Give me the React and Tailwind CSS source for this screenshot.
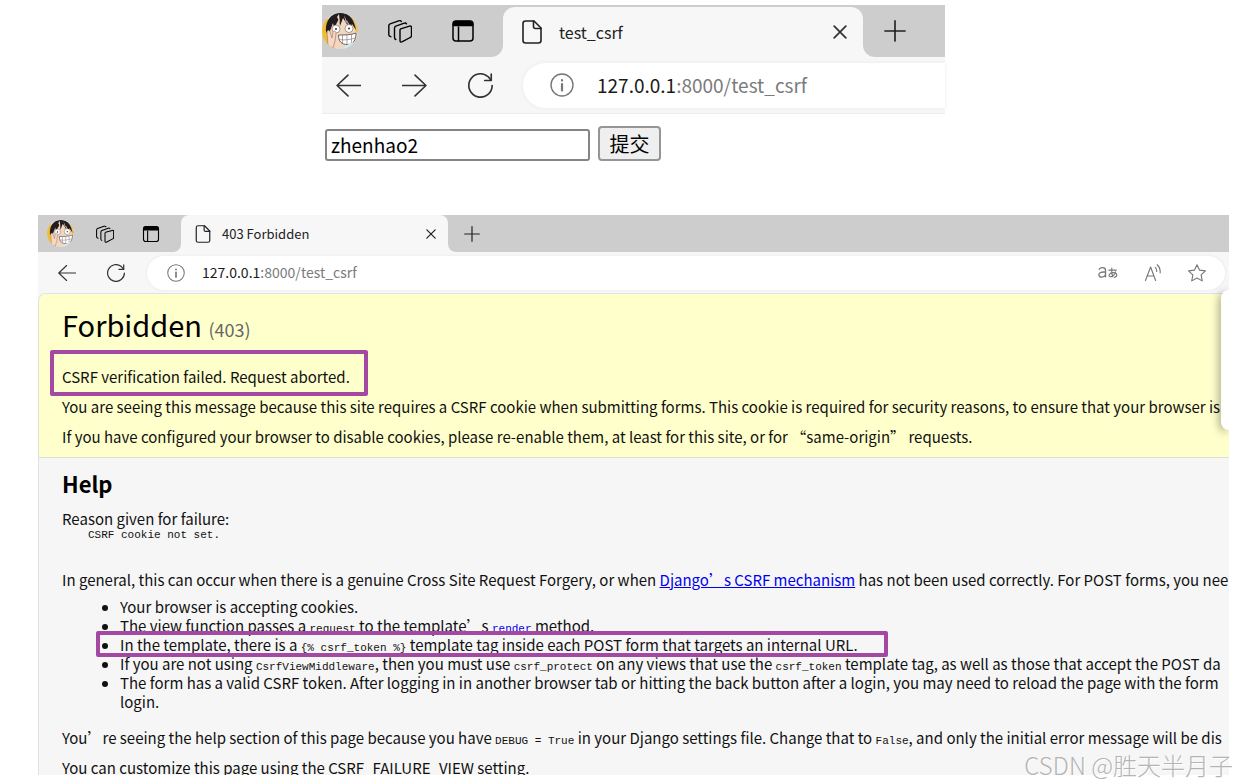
import React from 'react';

const AvatarIcon = ({ className }) => (
    <svg viewBox="0 0 36 36" className={className} aria-hidden="true">
        <clipPath id="avatar-circle">
            <circle cx="18" cy="18" r="18" />
        </clipPath>
        <g clipPath="url(#avatar-circle)">
            <rect width="36" height="36" fill="#e3dcd6" />
            <path d="M0 6h12v30H6L0 26z" fill="#efbd33" />
            <path d="M27 4h9v16l-5-2z" fill="#e8c25c" />
            <path d="M6 16 9 7 20 3l10 5 4 12-1 9-9 6H12l-6-8z" fill="#f3d6c0" />
            <path d="M4 19C3 9 8 1 17 0c9-1 15 5 17 17l-4-6-1 4-4-8 1 6-5-8-3 8-1-7-5 9-1-5-3 8-1 4z" fill="#211c1f" />
            <path d="m15 4 2-3 1 9zM22 2l3 7-1 1z" fill="#f3d6c0" />
            <circle cx="14" cy="16" r="4" fill="#fff" stroke="#6b5a55" strokeWidth="0.6" />
            <circle cx="27" cy="15.5" r="4" fill="#fff" stroke="#6b5a55" strokeWidth="0.6" />
            <circle cx="14" cy="16" r="0.9" fill="#222" />
            <circle cx="27" cy="15.5" r="0.9" fill="#222" />
            <path d="M16.500 22c6 0 12.500 0 17.500-2 0 6-2 11.500-8.500 11.500-6 0-9-3-9-9.500z" fill="#fff" stroke="#5c5050" strokeWidth="0.9" />
            <path d="M17 26.500c5 1 11.500 0 16.500-1.500M20.500 22v8M25 22v9M29.500 21.500v8.500" fill="none" stroke="#8b8080" strokeWidth="0.7" />
            <path d="M6 33 5 19c0-2 3-2 3 0l2 6 1-6c1-2 3-1 3 1l-1 8-2 7z" fill="#f6d8c4" stroke="#a57f6c" strokeWidth="0.7" />
            <path d="m21 34 10-5 1 8H21z" fill="#d3e8ec" />
        </g>
    </svg>
);

const LineIcon = ({ className, children, width = 1.6 }) => (
    <svg
        viewBox="0 0 24 24"
        className={className}
        fill="none"
        stroke="currentColor"
        strokeWidth={width}
        strokeLinecap="round"
        strokeLinejoin="round"
        aria-hidden="true"
    >
        {children}
    </svg>
);

const WorkspacesIcon = ({ className }) => (
    <LineIcon className={className} width={1.4}>
        <path d="M12.700 9.800 21.500 7.200q2-.6 2 1.300v7.900q0 1.500-1.300 2.100l-7.800 4.200q-2.400 1.200-2.400-1.300V11.200q0-1 .7-1.400z" />
        <path d="M7.800 20.500q-1.300-.5-1.300-2V9.200q0-1.500 1.300-2l8.500-3q1.600-.5 2.200.6" />
        <path d="M2.800 17.700q-2-.6-2-2V6.800q0-1.500 1.300-2L10.600 1.800q2-.6 2.700.6" />
    </LineIcon>
);

const TabActionsIcon = ({ className }) => (
    <LineIcon className={className} width={1.5}>
        <rect x="2" y="2" width="20" height="20" rx="3" />
        <path d="M2.500 6.500V5q0-2.500 2.500-2.500h14q2.500 0 2.500 2.500v1.500z" fill="currentColor" />
        <path d="M7.500 8v14" />
    </LineIcon>
);

const PageIcon = ({ className }) => (
    <LineIcon className={className}>
        <path d="M5.500 1h8.500l7 7v12.500q0 2.500-2.500 2.500h-13Q3 23 3 20.500v-17Q3 1 5.500 1z" />
        <path d="M13.500 1v5.500q0 2 2 2H21" />
    </LineIcon>
);

const CloseIcon = ({ className }) => (
    <LineIcon className={className} width={3}>
        <path d="m2 2 20 20M22 2 2 22" />
    </LineIcon>
);

const PlusIcon = ({ className }) => (
    <LineIcon className={className} width={1.8}>
        <path d="M12 1v22M1 12h22" />
    </LineIcon>
);

const BackIcon = ({ className }) => (
    <LineIcon className={className} width={1.5}>
        <path d="M23.500 12H1M11.500 2 1 12l10.500 10" />
    </LineIcon>
);

const ForwardIcon = ({ className }) => (
    <LineIcon className={className} width={1.5}>
        <path d="M.5 12H23M12.500 2 23 12 12.500 22" />
    </LineIcon>
);

const ReloadIcon = ({ className }) => (
    <LineIcon className={className} width={1.6}>
        <path d="M23.200 12a11.200 11.200 0 1 1-4-8.600l3 3.400" />
        <path d="M22.300 1v6.200H16" />
    </LineIcon>
);

const InfoIcon = ({ className }) => (
    <LineIcon className={className} width={1.4}>
        <circle cx="12" cy="12" r="11" />
        <path d="M12 11v6.500M12 7v.6" strokeWidth="2.200" />
    </LineIcon>
);

const TranslateIcon = ({ className }) => (
    <LineIcon className={className} width={1.6}>
        <path d="M1.500 7.500c1-2.500 7.500-3 7.500 1v8M9 11c-4-.5-8 0-8 3.200 0 4 6.500 3.500 8 0" />
        <path d="M13 8.500h9M16.500 6c-.3 4 0 7 1 10.500M21 10.500c-1 3.500-3.500 6-6 6-3.500 0-1.500-5 3-5 6 0 5.500 5 1.500 5.800" strokeWidth="1.300" />
    </LineIcon>
);

const ReadAloudIcon = ({ className }) => (
    <LineIcon className={className} width={1.5}>
        <path d="M2 22 8.800 4 15.500 22M4.500 16h8.500" />
        <path d="M15 4.500c1.500 1.500 2 3 2 5.500M17.500 1c3.500 3 4.500 6.500 4 11" />
    </LineIcon>
);

const StarIcon = ({ className }) => (
    <LineIcon className={className} width={1.5}>
        <path d="m12 1 3.400 7.200 7.900 1-5.800 5.400 1.500 7.900-7-3.900-7 3.900 1.500-7.900L.7 9.200l7.900-1z" />
    </LineIcon>
);

const Code = ({ children }) => (
    <code className="font-['Liberation_Mono',monospace] text-[11px] leading-none">{children}</code>
);

const SubmitWindow = () => (
    <section className="w-full max-w-[623px] mx-auto">
        <div className="flex bg-[#f7f7f7]">
            <div className="flex items-center w-[181px] h-[52px] shrink-0 bg-[#cdcdcd] rounded-br-xl">
                <AvatarIcon className="w-9 h-9" />
                <button aria-label="Workspaces" className="ml-[30px]"><WorkspacesIcon className="w-6 h-6" /></button>
                <button aria-label="Tab actions" className="ml-[39px]"><TabActionsIcon className="w-6 h-6" /></button>
            </div>
            <div className="w-[360px] shrink-0 bg-[#cdcdcd] pt-[2px]">
                <div className="flex items-center h-[50px] pl-[17px] pr-4 bg-[#f7f7f7] rounded-t-xl">
                    <PageIcon className="w-6 h-6 text-[#222]" />
                    <span className="ml-[15px] text-[16px] leading-6 text-[#222]">test_csrf</span>
                    <button aria-label="Close tab" className="ml-auto"><CloseIcon className="w-[14px] h-[14px] text-[#333]" /></button>
                </div>
            </div>
            <div className="flex items-center flex-1 pl-[21px] bg-[#cdcdcd] rounded-bl-xl">
                <button aria-label="New tab"><PlusIcon className="w-[22px] h-[22px] text-[#222]" /></button>
            </div>
        </div>
        <div className="flex items-center h-[57px] pl-[14px] bg-[#f7f7f7] border-b border-[#ececec] text-[#333]">
            <button aria-label="Back"><BackIcon className="w-[25px] h-[25px]" /></button>
            <button aria-label="Forward" className="ml-[41px]"><ForwardIcon className="w-[25px] h-[25px]" /></button>
            <button aria-label="Reload" className="ml-[41px]"><ReloadIcon className="w-[25px] h-[25px]" /></button>
            <div className="flex items-center flex-1 h-[45px] ml-[30px] pl-[27px] bg-white rounded-l-full text-[19px] shadow-[0_0_4px_#eaeaea]">
                <InfoIcon className="w-6 h-6 text-[#777]" />
                <span className="ml-[23px] text-[#7b7b7b]"><span className="text-[#1b1b1b]">127.0.0.1</span>:8000/test_csrf</span>
            </div>
        </div>
        <form className="flex items-end pt-3 pl-[3px]" onSubmit={(e) => e.preventDefault()}>
            <input
                type="text"
                name="username"
                aria-label="username"
                defaultValue="zhenhao2"
                className="w-[265px] h-8 px-1 pb-[2px] bg-white border-2 border-[#858585] rounded-[3px] text-[19px] leading-6 text-black"
            />
            <button type="submit" className="w-[63px] h-[35px] ml-2 bg-[#efefef] border-2 border-[#959595] rounded-[4px] text-[20px] leading-6">提交</button>
        </form>
    </section>
);

const ErrorWindow = () => (
    <section className="relative mt-[54px]">
        <div className="overflow-hidden whitespace-nowrap bg-[#f7f7f7]">
            <div className="flex">
                <div className="flex items-center w-[143px] h-[37px] shrink-0 pl-[9px] bg-[#cdcdcd] rounded-br-lg">
                    <AvatarIcon className="w-[27px] h-[27px]" />
                    <button aria-label="Workspaces" className="ml-[22px]"><WorkspacesIcon className="w-[18px] h-[18px]" /></button>
                    <button aria-label="Tab actions" className="ml-7"><TabActionsIcon className="w-[18px] h-[18px]" /></button>
                </div>
                <div className="w-[267px] shrink-0 bg-[#cdcdcd]">
                    <div className="flex items-center h-[37px] pl-[13px] pr-3 bg-[#f7f7f7] rounded-t-lg">
                        <PageIcon className="w-[18px] h-[18px] text-[#222]" />
                        <span className="ml-[10px] text-[13px] leading-5 text-[#222]">403 Forbidden</span>
                        <button aria-label="Close tab" className="ml-auto"><CloseIcon className="w-[10px] h-[10px] text-[#222]" /></button>
                    </div>
                </div>
                <div className="flex items-center flex-1 pl-4 bg-[#cdcdcd] rounded-bl-lg">
                    <button aria-label="New tab"><PlusIcon className="w-4 h-4 text-[#222]" /></button>
                </div>
            </div>
            <div className="flex items-center h-[41px] pl-5 pr-1 text-[#333]">
                <button aria-label="Back"><BackIcon className="w-[18px] h-[18px]" /></button>
                <button aria-label="Reload" className="ml-[31px]"><ReloadIcon className="w-[18px] h-[18px]" /></button>
                <div className="flex items-center flex-1 h-[34px] ml-[22px] pl-5 pr-[19px] bg-white rounded-full text-[14px] shadow-[0_0_3px_#e4e4e4]">
                    <InfoIcon className="w-[18px] h-[18px] text-[#777]" />
                    <span className="ml-[17px] text-[#7b7b7b]"><span className="text-[#1b1b1b]">127.0.0.1</span>:8000/test_csrf</span>
                    <div className="flex items-center gap-[26px] ml-auto text-[#777]">
                        <button aria-label="Translate"><TranslateIcon className="w-5 h-5" /></button>
                        <button aria-label="Read aloud"><ReadAloudIcon className="w-[18px] h-[18px]" /></button>
                        <button aria-label="Add to favorites"><StarIcon className="w-[18px] h-[18px]" /></button>
                    </div>
                </div>
            </div>

            <div className="border-l border-t border-[#e2e2e2] rounded-tl-lg overflow-hidden text-[15px] leading-[19px] text-[#111]">
                <div className="px-[23px] pt-3 pb-[11px] bg-[#ffffcc] border-b border-[#dddddd]">
                    <h1 className="text-[29px] leading-9 text-black">
                        Forbidden <span className="text-[18px] text-[#666]">(403)</span>
                    </h1>
                    <p className="mt-5">
                        <span className="relative inline-block">
                            CSRF verification failed. Request aborted.
                            <span className="absolute -left-3 -right-[18px] -top-[17px] -bottom-[10px] border-4 border-[#a349a4] rounded-xs"></span>
                        </span>
                    </p>
                    <p className="mt-[11px]">You are seeing this message because this site requires a CSRF cookie when submitting forms. This cookie is required for security reasons, to ensure that your browser is</p>
                    <p className="mt-[11px]">If you have configured your browser to disable cookies, please re-enable them, at least for this site, or for “same-origin” requests.</p>
                </div>
                <div className="pl-[23px] pt-[10px] bg-[#f6f6f6]">
                    <h2 className="text-[22px] leading-[30px] font-bold text-black">Help</h2>
                    <p className="mt-[11px]">Reason given for failure:</p>
                    <pre className="pl-[26px] font-['Liberation_Mono',monospace] text-[11px] leading-[14px]">CSRF cookie not set.</pre>
                    <p className="mt-7">
                        In general, this can occur when there is a genuine Cross Site Request Forgery, or when{' '}
                        <a href="#csrf" className="text-[#0000ee] underline">Django’s CSRF mechanism</a> has not been used correctly. For POST forms, you nee
                    </p>
                    <ul className="mt-2 pl-[58px] list-disc">
                        <li>Your browser is accepting cookies.</li>
                        <li>The view function passes a <Code>request</Code> to the template’s <a href="#render" className="text-[#0000ee]"><Code>render</Code></a> method.</li>
                        <li>
                            <span className="relative">
                                In the template, there is a <Code>{'{% csrf_token %}'}</Code> template tag inside each POST form that targets an internal URL.
                                <span className="absolute -left-6 -right-[30px] -top-[3px] h-[26px] border-4 border-[#a349a4] rounded-xs"></span>
                            </span>
                        </li>
                        <li>If you are not using <Code>CsrfViewMiddleware</Code>, then you must use <Code>csrf_protect</Code> on any views that use the <Code>csrf_token</Code> template tag, as well as those that accept the POST da</li>
                        <li>
                            The form has a valid CSRF token. After logging in in another browser tab or hitting the back button after a login, you may need to reload the page with the form
                            <br />
                            login.
                        </li>
                    </ul>
                    <p className="mt-[17px]">You’re seeing the help section of this page because you have <Code>DEBUG = True</Code> in your Django settings file. Change that to <Code>False</Code>, and only the initial error message will be dis</p>
                    <p className="mt-[11px] h-[17px] overflow-hidden">You can customize this page using the CSRF_FAILURE_VIEW setting.</p>
                </div>
            </div>
        </div>

        {/* edge of the flyout that opens from the right */}
        <div className="absolute right-0 top-[75px] w-2 h-[140px] bg-white rounded-l-lg shadow-[-2px_2px_8px_rgba(0,0,0,0.35)] [clip-path:inset(-16px_0_-16px_-16px)]"></div>

        <span className="absolute -right-1 -bottom-[6px] text-[24px] leading-8 font-light text-[#b4b4b4] whitespace-nowrap [text-shadow:1px_1px_0_#fff]">CSDN @胜天半月子</span>
    </section>
);

const App = () => {
    return (
        <main className="pt-[5px] pl-[38px] pr-[7px] pb-2 bg-white font-['Noto_Sans_CJK_SC',sans-serif]">
            <SubmitWindow />
            <ErrorWindow />
        </main>
    );
};

export default App;
